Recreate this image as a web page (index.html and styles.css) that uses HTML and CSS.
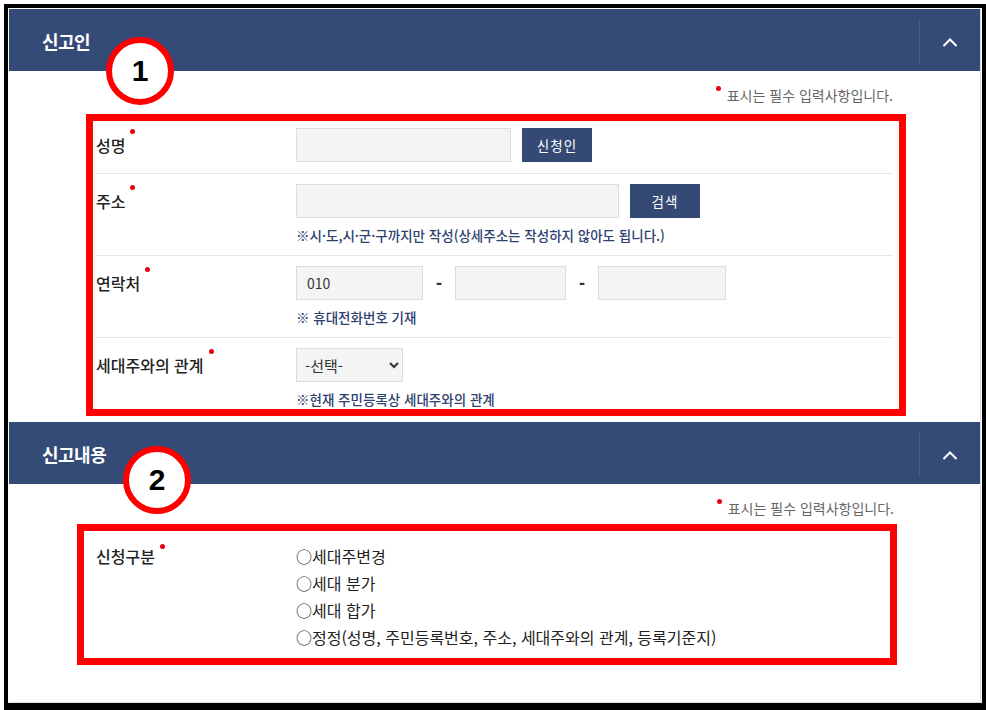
FILE: index.html
```html
<!DOCTYPE html>
<html lang="ko">
<head>
  <meta charset="UTF-8">
  <title>세대주 변경 신고</title>
  <link rel="stylesheet" href="styles.css">
</head>
<body>
<div class="frame">
  <div class="panel">

    <section class="sec">
      <div class="sec-head">
        <h2>신고인</h2>
        <button class="toggle" type="button" aria-label="접기">
          <svg width="16" height="10" viewBox="0 0 16 10"><polyline points="1.5,9 8,2.5 14.5,9" fill="none" stroke="#fff" stroke-width="2"/></svg>
        </button>
      </div>
      <span class="mark mark-1">1</span>

      <div class="sec-body">
        <p class="req"><span class="dot"></span>표시는 필수 입력사항입니다.</p>

        <div class="hl hl-1">
          <div class="row row-first">
            <div class="lbl">성명<span class="dot"></span></div>
            <div class="fld">
              <div class="line">
                <input type="text" class="inp w-name">
                <button type="button" class="btn">신청인</button>
              </div>
            </div>
          </div>

          <div class="row">
            <div class="lbl">주소<span class="dot"></span></div>
            <div class="fld">
              <div class="line">
                <input type="text" class="inp w-addr">
                <button type="button" class="btn">검색</button>
              </div>
              <p class="note">※시·도,시·군·구까지만 작성(상세주소는 작성하지 않아도 됩니다.)</p>
            </div>
          </div>

          <div class="row">
            <div class="lbl">연락처<span class="dot"></span></div>
            <div class="fld">
              <div class="line">
                <input type="text" class="inp w-tel1" value="010">
                <span class="dash">-</span>
                <input type="text" class="inp w-tel2">
                <span class="dash">-</span>
                <input type="text" class="inp w-tel3">
              </div>
              <p class="note">※ 휴대전화번호 기재</p>
            </div>
          </div>

          <div class="row row-last">
            <div class="lbl">세대주와의 관계<span class="dot"></span></div>
            <div class="fld">
              <div class="line">
                <select class="sel">
                  <option>-선택-</option>
                </select>
              </div>
              <p class="note">※현재 주민등록상 세대주와의 관계</p>
            </div>
          </div>
        </div>
      </div>
    </section>

    <section class="sec">
      <div class="sec-head">
        <h2>신고내용</h2>
        <button class="toggle" type="button" aria-label="접기">
          <svg width="16" height="10" viewBox="0 0 16 10"><polyline points="1.5,9 8,2.5 14.5,9" fill="none" stroke="#fff" stroke-width="2"/></svg>
        </button>
      </div>
      <span class="mark mark-2">2</span>

      <div class="sec-body sec-body-2">
        <p class="req"><span class="dot"></span>표시는 필수 입력사항입니다.</p>

        <div class="hl hl-2">
          <div class="row row-kind">
            <div class="lbl lbl-kind">신청구분<span class="dot"></span></div>
            <ul class="opts">
              <li>○세대주변경</li>
              <li>○세대 분가</li>
              <li>○세대 합가</li>
              <li>○정정(성명, 주민등록번호, 주소, 세대주와의 관계, 등록기준지)</li>
            </ul>
          </div>
        </div>
      </div>
    </section>

  </div>
</div>
</body>
</html>
```

FILE: styles.css
```css
body {
  margin: 0;
  background: #fff;
  font-family: "Noto Sans CJK KR", "Noto Sans", sans-serif;
  color: #222;
}
.frame {
  box-sizing: border-box;
  width: 982px;
  height: 706px;
  margin: 4px 0 0 4px;
  padding: 1px 1px 0 1px;
  border: 4px solid #000;
  border-bottom-width: 7px;
}
.panel {
  border-right: 1px solid #ddd;
  border-bottom: 1px solid #ddd;
}
.sec {
  position: relative;
}
.sec-head {
  display: flex;
  height: 62px;
  background: #354b77;
}
.sec-head h2 {
  flex: 1;
  margin: 0;
  padding: 2px 0 0 33px;
  font-size: 18px;
  font-weight: 700;
  line-height: 60px;
  color: #fff;
  letter-spacing: -0.5px;
}
.toggle {
  display: flex;
  align-items: center;
  justify-content: center;
  width: 61px;
  margin: 11px 0 8px;
  padding: 0;
  background: none;
  border: none;
  border-left: 1px solid #485e8a;
}
.mark {
  position: absolute;
  z-index: 2;
  box-sizing: border-box;
  width: 68px;
  height: 68px;
  border: 6px solid #f00;
  border-radius: 50%;
  background: #fff;
  font-family: "Liberation Sans", Arial, sans-serif;
  font-size: 30px;
  font-weight: 700;
  line-height: 56px;
  text-align: center;
  color: #000;
}
.mark-1 {
  left: 97px;
  top: 28px;
}
.mark-2 {
  left: 114px;
  top: 24px;
}
.sec-body {
  height: 351px;
  box-sizing: border-box;
  padding-top: 14px;
}
.sec-body-2 {
  height: 218px;
}
.req {
  margin: 0 87px 9px 0;
  font-size: 14px;
  line-height: 20px;
  color: #666;
  text-align: right;
}
.sec-body-2 .req {
  margin-bottom: 6px;
  margin-right: 86px;
}
.dot {
  display: inline-block;
  width: 5px;
  height: 5px;
  border-radius: 50%;
  background: #e60012;
  vertical-align: top;
  margin: 1px 0 0 5px;
}
.req .dot {
  margin: 1px 6px 0 0;
}
.hl {
  box-sizing: border-box;
  width: 820px;
  border: 7px solid #f00;
}
.hl-1 {
  margin-left: 77px;
}
.hl-2 {
  margin-left: 68px;
}
.row {
  display: flex;
  margin: 0 6px 0 3px;
  padding: 10px 0 11px;
  border-top: 1px solid #e6e6e6;
}
.row-first {
  padding-top: 7px;
  border-top: none;
}
.row-last {
  padding-bottom: 1px;
}
.lbl {
  flex: none;
  width: 200px;
  font-size: 16px;
  font-weight: 500;
  line-height: 34px;
  color: #222;
}
.line {
  display: flex;
  align-items: center;
}
.inp {
  box-sizing: border-box;
  height: 34px;
  margin: 0;
  padding: 0 10px;
  border: 1px solid #dcdcdc;
  background: #f4f4f4;
  font-family: inherit;
  font-size: 14px;
  color: #333;
}
.w-name { width: 215px; }
.w-addr { width: 323px; }
.w-tel1 { width: 127px; }
.w-tel2 { width: 111px; }
.w-tel3 { width: 128px; }
.dash {
  width: 32px;
  text-align: center;
  font-family: "Liberation Sans", Arial, sans-serif;
  font-size: 18px;
  font-weight: 700;
  color: #333;
}
.btn {
  width: 70px;
  height: 34px;
  margin-left: 11px;
  padding: 0;
  border: none;
  background: #344a75;
  color: #fff;
  font-family: inherit;
  font-size: 13.5px;
  letter-spacing: 1px;
}
.sel {
  box-sizing: border-box;
  width: 107px;
  height: 34px;
  padding: 0 4px;
  border: 1px solid #dcdcdc;
  background-color: #f4f4f4;
  font-family: inherit;
  font-size: 15px;
  color: #333;
}
.note {
  margin: 8px 0 0;
  font-size: 13.5px;
  font-weight: 500;
  line-height: 18px;
  color: #2e4170;
}
.row-kind {
  margin: 0 0 0 12px;
  padding: 12px 0 7px;
  border-top: none;
}
.lbl-kind {
  line-height: 27px;
}
.opts {
  margin: 0;
  padding: 0;
  list-style: none;
  font-size: 16px;
  line-height: 27px;
  color: #222;
}
```
